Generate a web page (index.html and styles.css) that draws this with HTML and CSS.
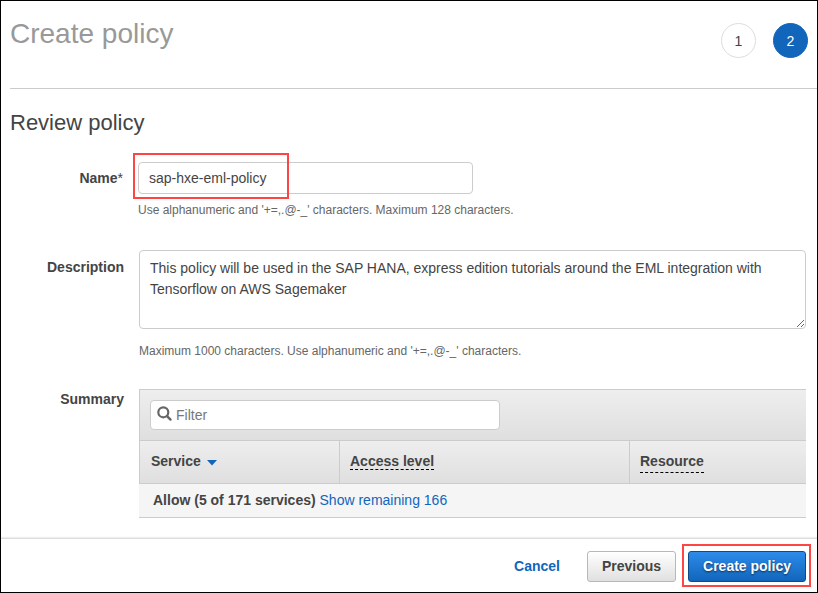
FILE: index.html
```html
<!DOCTYPE html>
<html lang="en">
<head>
<meta charset="utf-8">
<title>Create policy</title>
<link rel="stylesheet" href="styles.css">
</head>
<body>
<div class="window">
  <header class="header">
    <h1>Create policy</h1>
    <ol class="steps">
      <li class="step">1</li>
      <li class="step step-active">2</li>
    </ol>
  </header>
  <main class="content">
    <h2>Review policy</h2>
    <div class="field field-name">
      <label for="name">Name<span class="required">*</span></label>
      <div class="control">
        <input id="name" class="name-input" type="text" value="sap-hxe-eml-policy">
        <span class="mark mark-name"></span>
        <p class="hint">Use alphanumeric and '+=,.@-_' characters. Maximum 128 characters.</p>
      </div>
    </div>
    <div class="field field-description">
      <label for="description">Description</label>
      <div class="control">
        <textarea id="description" spellcheck="false">This policy will be used in the SAP HANA, express edition tutorials around the EML integration with Tensorflow on AWS Sagemaker</textarea>
        <p class="hint">Maximum 1000 characters. Use alphanumeric and '+=,.@-_' characters.</p>
      </div>
    </div>
    <div class="field field-summary">
      <span class="label">Summary</span>
      <div class="table">
        <div class="toolbar">
          <div class="filter">
            <svg class="search-icon" width="16" height="16" viewBox="0 0 16 16"><circle cx="6.3" cy="6.3" r="5" fill="none" stroke="#666" stroke-width="2.2"/><path d="M10 10.1 13.5 13.6" fill="none" stroke="#666" stroke-width="2.4" stroke-linecap="round"/></svg>
            <input class="filter-input" type="text" placeholder="Filter">
          </div>
        </div>
        <div class="columns">
          <div class="column">Service<svg class="caret" width="10" height="6" viewBox="0 0 10 6"><path d="M0 0H10L5 5.5Z" fill="#1166bb"/></svg></div>
          <div class="column"><span class="term">Access level</span></div>
          <div class="column"><span class="term term-low">Resource</span></div>
        </div>
        <div class="group-row"><b>Allow (5 of 171 services)</b> <a>Show remaining 166</a></div>
      </div>
    </div>
  </main>
  <footer class="footer">
    <a class="cancel">Cancel</a>
    <button class="button">Previous</button>
    <div class="primary-wrap">
      <button class="button button-primary">Create policy</button>
      <span class="mark mark-create"></span>
    </div>
  </footer>
</div>
</body>
</html>
```
FILE: styles.css
```css
* { box-sizing: border-box; }

body {
  margin: 0;
  font: 14px/20px "Liberation Sans", Arial, sans-serif;
  color: #444;
  background: #fff;
}

input, textarea, button { font: inherit; color: inherit; margin: 0; }

h1, h2, p, ol { margin: 0; padding: 0; font-weight: normal; }

a { color: #1166bb; }

.window {
  display: flex;
  flex-direction: column;
  height: 593px;
  border: 1px solid #000;
  overflow: hidden;
}

.header {
  display: flex;
  justify-content: space-between;
  height: 88px;
  margin-left: 9px;
  padding: 16px 9px 0 0;
  border-bottom: 1px solid #ccc;
}

h1 { font-size: 28px; line-height: 34px; color: #999; }

.steps { display: flex; gap: 17px; padding-top: 6px; list-style: none; }

.step {
  width: 35px;
  height: 35px;
  border: 1px solid #ddd;
  border-radius: 50%;
  line-height: 35px;
  text-align: center;
}

.step-active { background: #1166bb; border-color: #1166bb; color: #fff; }

.content { flex: 1; padding: 20px 11px 0 9px; }

h2 { font-size: 22px; line-height: 28px; color: #444; }

.field { display: grid; grid-template-columns: 114px 1fr; column-gap: 15px; }

.field label, .label { font-weight: bold; text-align: right; }

.required { font-weight: normal; }

.control { position: relative; }

.hint { font-size: 12px; line-height: 16px; color: #666; }

.field-name { margin-top: 25px; grid-template-columns: 113px 1fr; }
.field-name label { padding-top: 6px; }

.name-input {
  display: block;
  width: 335px;
  height: 32px;
  padding: 0 10px;
  border: 1px solid #ccc;
  border-radius: 4px;
}

.field-name .hint { margin-top: 8px; }

.field-description { margin-top: 32px; }
.field-description label { padding-top: 7px; }

textarea {
  display: block;
  width: 667px;
  height: 79px;
  padding: 7px 10px;
  border: 1px solid #ccc;
  border-radius: 4px;
  line-height: 21px;
  resize: vertical;
}

.field-description .hint { margin-top: 14px; }

.field-summary { margin-top: 30px; }

.table { border: solid #ccc; border-width: 1px 0; }

.toolbar {
  height: 51px;
  padding: 10px;
  border: solid #ccc;
  border-width: 0 0 1px 1px;
  background: linear-gradient(#eee, #dfdfdf);
}

.filter {
  display: flex;
  width: 350px;
  height: 30px;
  padding: 5px 6px;
  border: 1px solid #ccc;
  border-radius: 4px;
  background: #fff;
}

.filter-input { flex: 1; height: 18px; padding: 0; border: 0; margin-left: 3px; }
.filter-input::placeholder { color: #777; }

.columns {
  display: grid;
  grid-template-columns: 199px 290px 1fr;
  height: 43px;
  border: solid #ccc;
  border-width: 0 0 1px 1px;
  background: linear-gradient(#eee, #dfdfdf);
}

.column { padding: 10px 10px 0 11px; font-weight: bold; }
.column + .column { padding-left: 10px; border-left: 1px solid #ccc; }

.caret { margin-left: 6px; vertical-align: 0; }

.term { display: inline-block; height: 19px; border-bottom: 1px dashed #000; }
.term-low { height: 22px; }

.group-row { height: 33px; padding: 6px 14px; background: #f5f5f5; }

.footer {
  display: flex;
  height: 54px;
  padding: 12px 11px 0 0;
  justify-content: flex-end;
  border-top: 1px solid #ddd;
  box-shadow: 0 -1px 1px #eee;
}

.cancel { margin: 5px 27px 0 0; font-weight: bold; }

.button {
  display: block;
  width: 89px;
  height: 31px;
  padding: 0 0 2px;
  border: 1px solid #b8b8b8;
  border-radius: 3px;
  background: linear-gradient(#fff, #e0e0e0);
  font-weight: bold;
}

.primary-wrap { position: relative; margin-left: 12px; }

.button-primary {
  width: 118px;
  border-color: #0c4a8a;
  background: linear-gradient(#2d8bea, #1166bb);
  color: #fff;
  text-shadow: 0 1px 2px rgba(0, 0, 0, 0.6);
}

/* Highlight frames drawn over the controls */
.mark { position: absolute; border: 2px solid #f44; pointer-events: none; }
.mark-name { left: -5px; top: -9px; width: 156px; height: 46px; }
.mark-create { left: -6px; top: -7px; width: 129px; height: 43px; }
```
